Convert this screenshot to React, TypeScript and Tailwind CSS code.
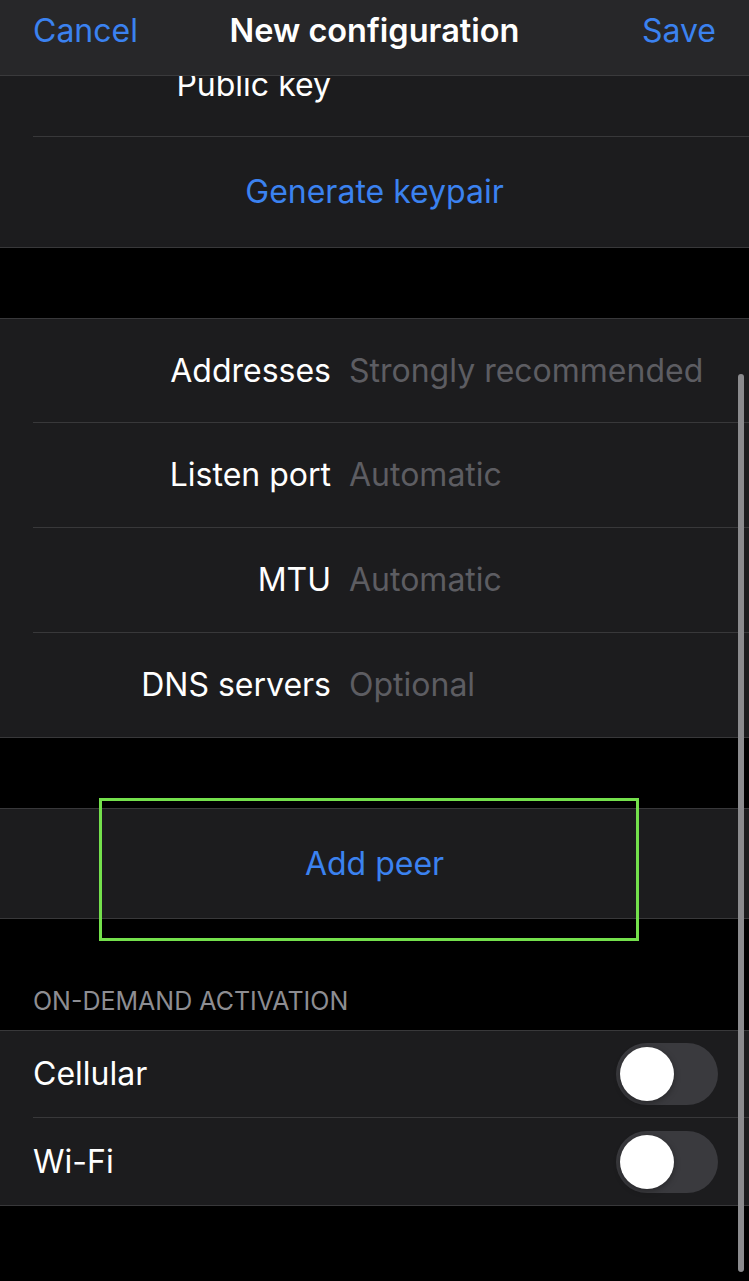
const font = { fontFamily: "Inter, 'Liberation Sans', sans-serif" };

function FieldRow({ label, value, h, last }: { label: string; value: string; h: string; last?: boolean }) {
  return (
    <div className="pl-[33px]">
      <div className={`flex ${h} items-center ${last ? "" : "border-b border-[#38383a]"}`}>
        <div className="w-[298px] shrink-0 text-right text-[32px] text-white">{label}</div>
        <div className="ml-[18px] text-[32px] text-[#5d5d62]">{value}</div>
      </div>
    </div>
  );
}

function Toggle() {
  return (
    <div className="flex h-[62px] w-[102px] items-center rounded-full bg-[#3a3a3e] px-[4px]">
      <div className="h-[54px] w-[54px] rounded-full bg-white shadow-[0_2px_6px_rgba(0,0,0,0.35)]" />
    </div>
  );
}

function SwitchRow({ label, last }: { label: string; last?: boolean }) {
  return (
    <div className="pl-[33px]">
      <div className={`flex h-[87px] items-center justify-between pr-[31px] ${last ? "" : "border-b border-[#38383a]"}`}>
        <span className="text-[32px] text-white">{label}</span>
        <Toggle />
      </div>
    </div>
  );
}

export default function App() {
  return (
    <div className="relative h-[1281px] w-[749px] overflow-hidden bg-black" style={font}>
      {/* nav bar */}
      <div className="grid h-[76px] grid-cols-[1fr_auto_1fr] items-center border-b border-[#3a3a3c] bg-[#272729] px-[33px] pb-[13px]">
        <span className="text-[32px] text-[#3b82f0]">Cancel</span>
        <span className="text-[32.5px] font-semibold text-white">New configuration</span>
        <span className="text-right text-[32px] text-[#3b82f0]">Save</span>
      </div>

      {/* interface section (scrolled) */}
      <div className="border-b border-[#38383a] bg-[#1c1c1e]">
        <div className="pl-[33px]">
          <div className="h-[61px] overflow-hidden border-b border-[#38383a]">
            <div className="-mt-[10px] w-[298px] text-right text-[32px] leading-[38px] text-white">Public key</div>
          </div>
        </div>
        <div className="flex h-[110px] items-center justify-center text-[32px] text-[#3b82f0]">Generate keypair</div>
      </div>

      <div className="h-[70px]" />

      <div className="border-y border-[#38383a] bg-[#1c1c1e]">
        <FieldRow label="Addresses" value="Strongly recommended" h="h-[104px]" />
        <FieldRow label="Listen port" value="Automatic" h="h-[105px]" />
        <FieldRow label="MTU" value="Automatic" h="h-[105px]" />
        <FieldRow label="DNS servers" value="Optional" h="h-[104px]" last />
      </div>

      <div className="h-[70px]" />

      <div className="relative border-y border-[#38383a] bg-[#1c1c1e]">
        <div className="flex h-[109px] items-center justify-center text-[32px] text-[#3b82f0]">Add peer</div>
        <div className="absolute left-[99px] top-[-11px] h-[143px] w-[540px] border-[3px] border-[#74e04c]" />
      </div>

      <div className="px-[33px] pb-[15px] pt-[68px] text-[25px] uppercase leading-[28px] text-[#8d8d92]">On-Demand Activation</div>

      <div className="border-y border-[#38383a] bg-[#1c1c1e]">
        <SwitchRow label="Cellular" />
        <SwitchRow label="Wi-Fi" last />
      </div>

      {/* scroll indicator */}
      <div className="absolute left-[738px] top-[374px] h-[898px] w-[6px] rounded-full bg-[#8b8b8e]" />
    </div>
  );
}
